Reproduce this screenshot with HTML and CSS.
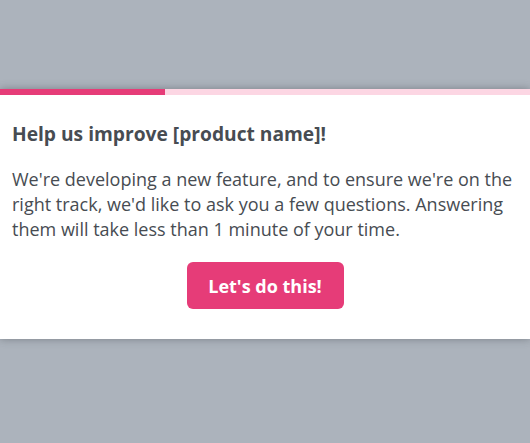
FILE: index.html
```html
<!DOCTYPE html>
<html lang="en">
<head>
<meta charset="utf-8">
<link rel="stylesheet" href="styles.css">
</head>
<body>
<div class="page">
  <section class="card">
    <div class="progress"><div class="progress-fill" style="width:165px"></div></div>
    <div class="content">
      <h1 class="title">Help us improve [product name]!</h1>
      <p class="text">We're developing a new feature, and to ensure we're on the right track, we'd like to ask you a few questions. Answering them will take less than 1 minute of your time.</p>
      <div class="actions"><button class="btn">Let's do this!</button></div>
    </div>
  </section>
</div>
</body>
</html>
```
FILE: styles.css
```css
html, body {
  margin: 0;
  padding: 0;
  background: #acb3bc;
  height: 100%;
}
.page {
  padding-top: 89px;
  font-family: "Open Sans", "Noto Sans", sans-serif;
}
.card {
  background: #fff;
  box-shadow: 0 0 8px rgba(60, 65, 72, 0.45);
}
.progress {
  height: 6px;
  background: #fcd6e3;
}
.progress-fill {
  height: 100%;
  background: #e63c78;
}
.content {
  padding: 26px 12px 30px 12px;
}
.title {
  margin: 0;
  font-size: 19.2px;
  font-weight: 700;
  color: #474c52;
  line-height: 26px;
}
.text {
  margin: 20px 0 0 0;
  font-size: 18px;
  line-height: 25px;
  color: #474c52;
}
.actions {
  display: flex;
  justify-content: center;
  margin-top: 20px;
}
.btn {
  width: 157px;
  height: 47px;
  border: none;
  border-radius: 6px;
  background: #e63c78;
  color: #fff;
  font-family: "Open Sans", "Noto Sans", sans-serif;
  font-weight: 700;
  font-size: 18px;
  padding: 0;
}
```
